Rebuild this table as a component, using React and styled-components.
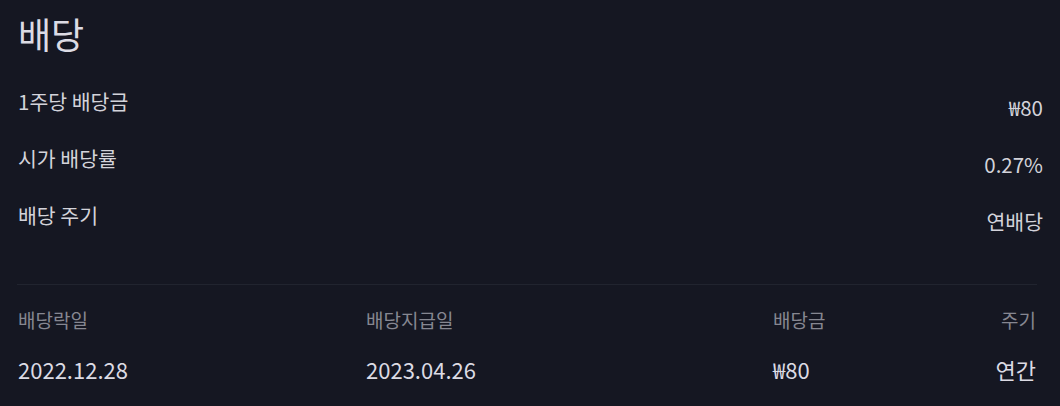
import React from 'react';
import styled, { createGlobalStyle } from 'styled-components';

const GlobalStyle = createGlobalStyle`
    html, body {
        margin: 0;
        padding: 0;
        background: #151722;
    }
    body {
        font-family: 'Noto Sans CJK KR', 'Noto Sans', sans-serif;
    }
`

const Page = styled.div`
    width: 1060px;
    height: 406px;
    box-sizing: border-box;
    padding: 8px 17px 0 18px;
    background: #151722;
    overflow: hidden;
`

const Title = styled.h1`
    margin: 0;
    font-size: 36px;
    line-height: 50px;
    font-weight: 400;
    color: #dcdbe4;
`

const Summary = styled.div`
    display: flex;
    flex-direction: column;
    margin-top: 14px;
`

const SummaryRow = styled.div`
    display: flex;
    justify-content: space-between;
    align-items: center;
    height: 57px;
    font-size: 20.5px;
    color: #d3d3da;
`

const Label = styled.span`
    margin-top: ${p => p.$shift || 0}px;
`

const Divider = styled.hr`
    margin: 41px 6px 0 -1px;
    border: 0;
    border-top: 1px solid #21242f;
`

const Table = styled.div`
    display: grid;
    grid-template-columns: 348px 407px 1fr auto;
    margin-right: 7px;
    padding-top: 18px;
`

const HeadCell = styled.div`
    font-size: 19px;
    line-height: 34px;
    color: #868791;
    text-align: ${p => (p.$right ? 'right' : 'left')};
`

const Cell = styled.div`
    font-size: 22px;
    line-height: 34px;
    margin-top: 15px;
    color: #dcdbe4;
    text-align: ${p => (p.$right ? 'right' : 'left')};
`

const summary = [
    { label: '1주당 배당금', value: '₩80' },
    { label: '시가 배당률', value: '0.27%' },
    { label: '배당 주기', value: '연배당' },
]

const App = () => {
    return (
        <Page>
            <GlobalStyle />
            <Title>배당</Title>
            <Summary>
                {summary.map(row => (
                    <SummaryRow key={row.label}>
                        <Label>{row.label}</Label>
                        <Label $shift={12}>{row.value}</Label>
                    </SummaryRow>
                ))}
            </Summary>
            <Divider />
            <Table>
                <HeadCell>배당락일</HeadCell>
                <HeadCell>배당지급일</HeadCell>
                <HeadCell>배당금</HeadCell>
                <HeadCell $right>주기</HeadCell>
                <Cell>2022.12.28</Cell>
                <Cell>2023.04.26</Cell>
                <Cell>₩80</Cell>
                <Cell $right>연간</Cell>
            </Table>
        </Page>
    )
}

export default App;
